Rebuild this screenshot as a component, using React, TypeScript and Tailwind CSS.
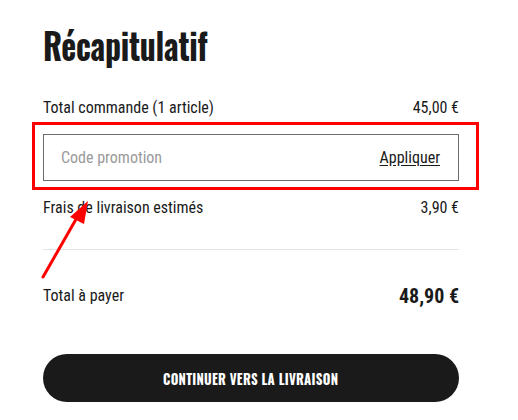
export default function App() {
  return (
    <div className="relative w-[518px] h-[420px] bg-white font-['Roboto_Condensed',sans-serif] text-[#1a1a1a]">
      <div className="ml-[43px] flex w-[416px] flex-col pt-[20px]">
        <h1 className="origin-left scale-x-[0.86] font-['Oswald',sans-serif] font-bold text-[37px] leading-[50px] tracking-[-0.3px]">Récapitulatif</h1>

        <div className="mt-[28px] flex items-center justify-between text-[16px] leading-[20px]">
          <span>Total commande (1 article)</span>
          <span>45,00 €</span>
        </div>

        <div className="relative mt-[16px]">
          <div className="flex h-[47px] items-center justify-between border border-[#6b6b6b] pl-[17px] pr-[18px] text-[16px]">
            <span className="text-[#9a9a9a]">Code promotion</span>
            <span className="underline underline-offset-2">Appliquer</span>
          </div>
          <div className="absolute -left-[11px] -right-[20px] -top-[12px] -bottom-[9px] border-[3px] border-[#ff0000]" />
        </div>

        <div className="mt-[17px] flex items-center justify-between text-[16px] leading-[20px]">
          <span>Frais de livraison estimés</span>
          <span>3,90 €</span>
        </div>

        <div className="mt-[31px] h-px bg-[#e3e3e3]" />

        <div className="mt-[34px] flex items-center justify-between">
          <span className="text-[16px] leading-[20px]">Total à payer</span>
          <span className="font-bold text-[20px] leading-[24px]">48,90 €</span>
        </div>

        <button className="mt-[46px] flex h-[48px] w-full items-center justify-center rounded-full bg-[#1a1a1a] text-white">
          <span className="scale-x-[0.87] font-['Oswald',sans-serif] text-[15px] font-bold uppercase tracking-[0.3px]">
            Continuer vers la livraison
          </span>
        </button>
      </div>

      <svg className="absolute left-0 top-0" width="518" height="420" viewBox="0 0 518 420">
        <line x1="43" y1="277" x2="79" y2="214" stroke="#ff0000" strokeWidth="3" strokeLinecap="round" />
        <polygon points="88,201 70,217 84,224" fill="#ff0000" />
      </svg>
    </div>
  );
}
